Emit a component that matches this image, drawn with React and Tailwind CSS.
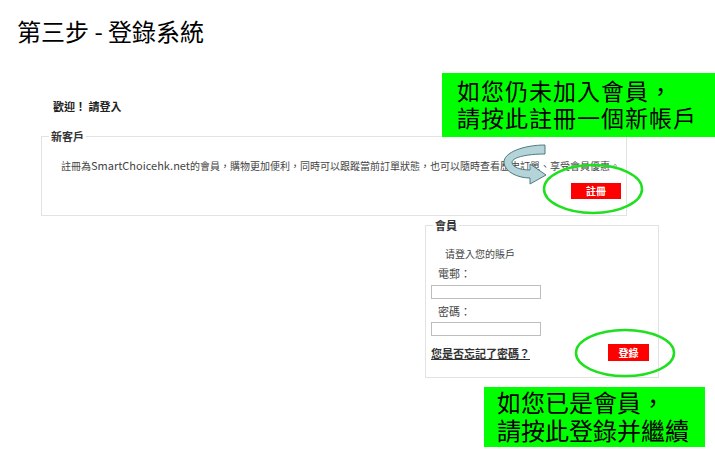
import React from "react";

function Overlay() {
  return (
    <svg
      className="absolute left-0 top-0 pointer-events-none"
      width="715"
      height="460"
      viewBox="0 0 715 460"
    >
      <path
        d="M545,145 C525,145 503,152 504,163 C505,172 518,178 530,178 L530,184 L546,175 L530,164 L530,170 C520,170 512,167 512,162 C513,157 528,154 545,154 Z"
        fill="#b4d4d9"
        stroke="#4f7a80"
        strokeWidth="1"
      />
      <ellipse cx="593" cy="189" rx="49" ry="24" fill="none" stroke="#1ee01e" strokeWidth="2.5" />
      <ellipse cx="625" cy="353" rx="49" ry="23" fill="none" stroke="#1ee01e" strokeWidth="2.5" />
    </svg>
  );
}

export default function App() {
  return (
    <div className="relative w-[715px] h-[460px] overflow-hidden bg-white text-[#333] font-['Noto_Sans_CJK_TC','Noto_Sans',sans-serif]">
      <h1 className="pl-[17px] pt-[17px] text-[24px] leading-[28px] font-normal text-black">
        第三步 - 登錄系統
      </h1>

      <p className="mt-[54px] pl-[53px] text-[11px] leading-[14px] font-bold text-[#222]">
        歡迎！ 請登入
      </p>

      <fieldset className="mt-[16px] ml-[41px] w-[586px] border border-[#e2e2e2] p-0">
        <legend className="ml-[7px] px-[2px] text-[11px] leading-[14px] font-bold text-[#333]">
          新客戶
        </legend>
        <div className="pl-[19px] pr-[5px] pt-[15px] pb-[16px]">
          <p className="whitespace-nowrap text-[10px] leading-[14px] text-[#444]">
            註冊為<span className="text-[11px]">SmartChoicehk.net</span>的會員，購物更加便利，同時可以跟蹤當前訂單狀態，也可以隨時查看歷史訂單、享受會員優惠。
          </p>
          <div className="mt-[10px] flex justify-end">
            <button className="w-[50px] h-[16px] bg-[#ff0000] text-white text-[10px] leading-[16px] font-bold">
              註冊
            </button>
          </div>
        </div>
      </fieldset>

      <fieldset className="mt-[2px] ml-[425px] w-[234px] border border-[#e2e2e2] p-0">
        <legend className="ml-[7px] px-[2px] text-[11px] leading-[14px] font-bold text-[#333]">
          會員
        </legend>
        <div className="pl-[5px] pr-[9px] pt-[15px] pb-[16px] text-[10px] leading-[14px] text-[#444]">
          <p className="pl-[14px]">请登入您的賬戶</p>
          <p className="mt-[5px] pl-[7px] text-[11px]">電郵：</p>
          <input className="mt-[5px] block w-[110px] h-[14px] border border-[#bdbdbd] bg-white" />
          <p className="mt-[5px] pl-[7px] text-[11px]">密碼：</p>
          <input type="password" className="mt-[4px] block w-[110px] h-[14px] border border-[#bdbdbd] bg-white" />
          <div className="mt-[8px] flex items-center justify-between">
            <a className="text-[11px] font-bold underline text-[#333]">您是否忘記了密碼？</a>
            <button className="w-[41px] h-[17px] bg-[#ff0000] text-white text-[10px] leading-[17px] font-bold">
              登錄
            </button>
          </div>
        </div>
      </fieldset>

      <Overlay />

      <div className="absolute left-[442px] top-[73px] w-[273px] h-[64px] bg-[#00ff00] pl-[15px] pt-[4px] text-[23px] leading-[27px] tracking-[1px] text-black">
        <p>如您仍未加入會員，</p>
        <p>請按此註冊一個新帳戶</p>
      </div>

      <div className="absolute left-[484px] top-[387px] w-[221px] h-[60px] bg-[#00ff00] pl-[13px] pt-[1px] text-[24px] leading-[28px] text-black">
        <p>如您已是會員，</p>
        <p>請按此登錄并繼續</p>
      </div>
    </div>
  );
}
